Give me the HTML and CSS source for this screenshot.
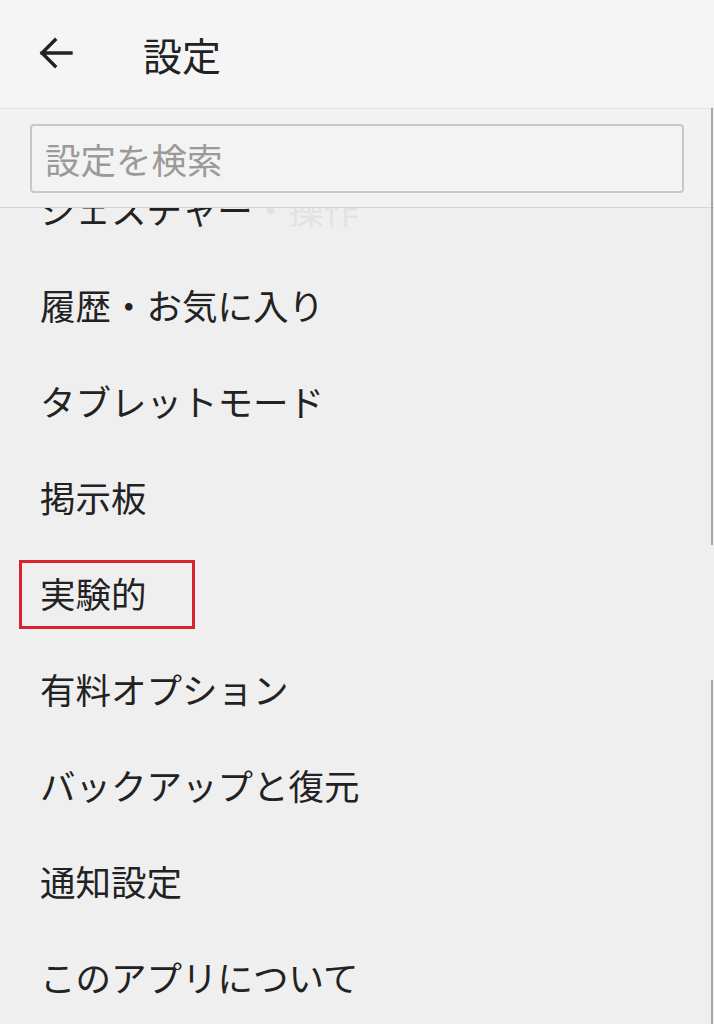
FILE: index.html
```html
<!DOCTYPE html>
<html lang="ja">
<head>
    <meta charset="UTF-8">
    <meta name="viewport" content="width=device-width, initial-scale=1.0">
    <title>設定</title>
    <link rel="stylesheet" href="styles.css">
</head>
<body>
    <div class="app">
        <header class="toolbar">
            <svg class="back" width="34" height="34" viewBox="0 0 34 34">
                <path d="M32 16H3 M16 3L3 16L16 29" fill="none" stroke="#222" stroke-width="3.4" stroke-linecap="square"/>
            </svg>
            <h1 class="title">設定</h1>
        </header>

        <div class="search">
            <div class="search-box">設定を検索</div>
        </div>

        <ul class="menu">
            <li class="item first">ジェスチャー<span class="fade">・操作</span></li>
            <li class="item">履歴・お気に入り</li>
            <li class="item">タブレットモード</li>
            <li class="item">掲示板</li>
            <li class="item marked">実験的<span class="mark"></span></li>
            <li class="item">有料オプション</li>
            <li class="item">バックアップと復元</li>
            <li class="item">通知設定</li>
            <li class="item">このアプリについて</li>
        </ul>

        <div class="edge edge-top"></div>
        <div class="edge edge-bottom"></div>
    </div>
</body>
</html>
```

FILE: styles.css
```css
body {
    margin: 0;
    background-color: #efefef;
    color: #222;
    font-family: "Noto Sans CJK JP", "Noto Sans", sans-serif;
}

.app {
    position: relative;
    width: 714px;
    height: 1024px;
    overflow: hidden;
    background-color: #efefef;
}

.toolbar {
    height: 108px;
    display: flex;
    align-items: center;
    padding-left: 39px;
    background-color: #f5f5f5;
    border-bottom: 1px solid #e2e2e2;
    box-shadow: 0 1px 2px rgba(0, 0, 0, 0.08);
    position: relative;
    z-index: 2;
}

.back {
    display: block;
}

.title {
    margin: 0 0 0 70px;
    font-size: 39px;
    font-weight: 400;
    line-height: 1;
}

.search {
    padding: 15px 30px 14px;
    background-color: #f2f2f2;
    border-bottom: 1px solid #d6d6d6;
    position: relative;
    z-index: 2;
}

.search-box {
    height: 65px;
    display: flex;
    align-items: center;
    padding-left: 13px;
    border: 2px solid #c8c8c8;
    border-radius: 4px;
    background-color: #f3f3f3;
    color: #9a9a9a;
    font-size: 35.5px;
}

.menu {
    list-style: none;
    margin: 0;
    padding: 0;
}

.item {
    position: relative;
    height: 96px;
    display: flex;
    align-items: center;
    padding-left: 40px;
    font-size: 35.5px;
}

.first {
    margin-top: -48px;
}

.fade {
    color: #e2e2e2;
}

.mark {
    position: absolute;
    left: 19px;
    top: 16px;
    width: 170px;
    height: 63px;
    border: 3px solid #d8232f;
}

.edge {
    position: absolute;
    right: 1px;
    width: 2px;
    background-color: #a8a8a8;
    z-index: 3;
}

.edge-top {
    top: 108px;
    height: 437px;
}

.edge-bottom {
    top: 680px;
    bottom: 0;
}
```
